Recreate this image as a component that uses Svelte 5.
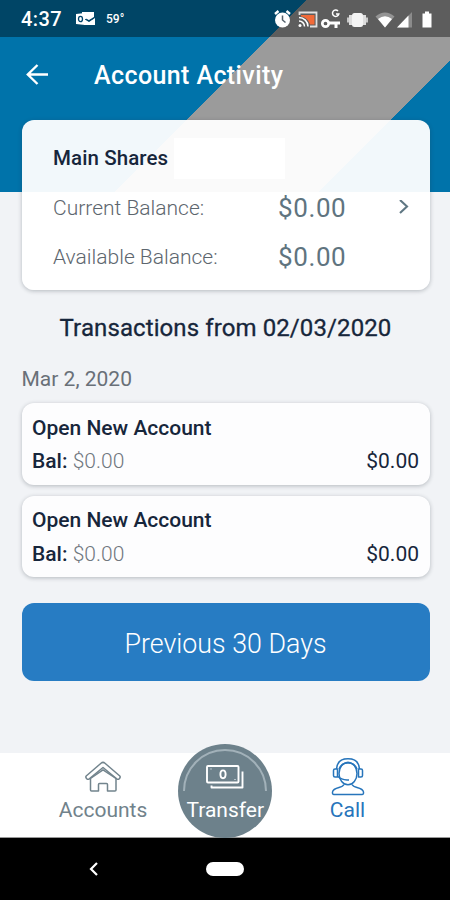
<script lang="ts">
  type Transaction = { title: string; balance: string; amount: string };

  const balances = [
    { label: 'Current Balance:', value: '$0.00' },
    { label: 'Available Balance:', value: '$0.00' }
  ];

  const transactions: Transaction[] = [
    { title: 'Open New Account', balance: '$0.00', amount: '$0.00' },
    { title: 'Open New Account', balance: '$0.00', amount: '$0.00' }
  ];
</script>

<div class="screen">
  <div class="status-bar">
    <span class="time">4:37</span>
    <svg class="mail" width="20" height="16" viewBox="0 0 20 16">
      <path d="M6 1h12v5l-5 3-7-2z" fill="#fff" />
      <path d="M8 8l5 3 6-4v7H8z" fill="#fff" />
      <path d="M0 3l9-1v12l-9-1z" fill="#fff" />
      <ellipse cx="4.5" cy="8" rx="2" ry="2.7" fill="none" stroke="#00446a" stroke-width="1.3" />
      <path d="M10 8l3 2 5-3" fill="none" stroke="#00446a" />
    </svg>
    <span class="temp">59°</span>
    <svg class="system" width="162" height="24" viewBox="0 0 162 24" fill="none">
      <g>
        <circle cx="9.5" cy="13" r="7.5" fill="#fff" />
        <path d="M2 7l3.5-3M13.5 4L17 7" stroke="#fff" stroke-width="2.4" />
        <path d="M9.500 8.500V13l3 2.500" stroke="#53606a" stroke-width="1.500" />
      </g>
      <path d="M26.500 8V5.500H43.500V19.500H37" stroke="#e2e2e2" stroke-width="1.800" />
      <path d="M28 8h13.500v9.500H37C36 13 32 10 28 9.500z" fill="#f26a38" />
      <path d="M26 10.500a9 9 0 0 1 9 9M26 14a5.500 5.500 0 0 1 5.500 5.500" stroke="#fff" stroke-width="1.500" />
      <circle cx="27" cy="18.500" r="1.500" fill="#fff" />
      <circle cx="52.500" cy="16.500" r="3.200" stroke="#fff" stroke-width="2.700" />
      <path d="M56 16h11M63 16v5" stroke="#fff" stroke-width="3" />
      <path d="M65 4a3.200 3.200 0 1 0 .8 3h-2.800" stroke="#fff" stroke-width="1.500" />
      <rect x="79" y="6" width="11" height="14" rx="2.500" fill="#f4f4f4" />
      <path d="M77.500 8v10M91.500 8v10" stroke="#ddd" stroke-width="3" />
      <path d="M75 10.500v5M94 10.500v5" stroke="#c8c8c8" stroke-width="2" />
      <path d="M102.500 9.500Q112 1.500 121.500 9.500L112 20.500z" fill="#949494" />
      <path d="M105 12Q112 6.500 119 12l-7 8.500z" fill="#fff" />
      <path d="M139 5v15.500H124z" fill="#8b8b8b" />
      <path d="M135.500 8.500v12H124z" fill="#fff" />
      <path d="M149.500 6.500h2.500v-2h4v2h2.500v14h-9z" fill="#fff" />
    </svg>
  </div>

  <header>
    <svg width="24" height="24" viewBox="0 0 24 24" fill="none" stroke="#fff" stroke-width="2.400">
      <path d="M23 11.500H3M12.500 2L2.800 11.500l9.700 9.500" />
    </svg>
    <h1>Account Activity</h1>
  </header>

  <main>
    <section class="card account">
      <div class="account-name">
        <span>Main Shares</span>
        <span class="mask"></span>
      </div>
      {#each balances as row, i}
        <div class="balance-row">
          <span class="label">{row.label}</span>
          <span class="value">{row.value}</span>
          {#if i === 0}
            <svg width="12" height="16" viewBox="0 0 12 16" fill="none" stroke="#5f7783" stroke-width="2.100">
              <path d="M2 0L9 6.500 2 13" />
            </svg>
          {/if}
        </div>
      {/each}
    </section>

    <h2>Transactions from 02/03/2020</h2>
    <p class="date">Mar 2, 2020</p>

    <div class="list">
      {#each transactions as item}
        <article class="card transaction">
          <div class="title">{item.title}</div>
          <div class="detail">
            <span><b>Bal:</b> <span class="bal">{item.balance}</span></span>
            <span class="amount">{item.amount}</span>
          </div>
        </article>
      {/each}
    </div>

    <button>Previous 30 Days</button>
  </main>

  <nav>
    <div class="tab accounts">
      <svg width="38" height="34" viewBox="0 0 38 34" fill="none" stroke="#72848d" stroke-width="1.500" stroke-linejoin="round">
        <path d="M2.200 16L17 3.200Q19 1.500 21 3.200L35.800 16q1 1.300-.6 2.800-1.200 1-2.500 0L19 7.500 5.300 18.800q-1.300 1-2.500 0Q1.200 17.300 2.200 16z" />
        <path d="M6.500 18.500V30q0 1 1 1h7v-6.500q0-1 1-1h7q1 0 1 1V31h7.500q1 0 1-1V18.500L19 9.800z" />
      </svg>
      <span>Accounts</span>
    </div>
    <div class="tab transfer">
      <svg class="arc" width="84" height="42" viewBox="0 0 84 42" fill="none">
        <path d="M1 42a41 41 0 0 1 82 0" stroke="#a2b1b9" stroke-width="2" />
      </svg>
      <svg width="38" height="25" viewBox="0 0 38 25" fill="none" stroke="#fff" stroke-width="1.900" stroke-linejoin="round">
        <rect x="1" y="1" width="31.500" height="16.500" rx="1" />
        <ellipse cx="17" cy="9.300" rx="2.600" ry="3.900" />
        <path d="M36.500 6.500v16H5.500v-2" />
        <path d="M4 4h2M28 14.500h2" stroke="#b4c1c8" stroke-width="1" />
      </svg>
      <span>Transfer</span>
    </div>
    <div class="tab call">
      <svg width="34" height="40" viewBox="0 0 34 40" fill="none" stroke="#2775bb" stroke-width="1.500" stroke-linejoin="round">
        <ellipse cx="17" cy="16.500" rx="9" ry="11.300" />
        <path d="M5.500 12C6 5 10.500 1.800 17 1.800S28 5 28.500 12" />
        <path d="M8 12C10 7 13 6 17 6s7 1 9 6" />
        <path d="M6.500 12H4q-1.500 0-1.500 1.500v5Q2.500 20 4 20h2.500zM27.500 12H30q1.500 0 1.500 1.500v5q0 1.500-1.500 1.500h-2.500z" />
        <path d="M7 19.500q3 3 9 3.500h2" />
        <path d="M13 27.500q-1 2-5 3-6 1.500-6.500 4.500-.3 2.500 1.500 2.500h28q1.800 0 1.500-2.500-.5-3-6.500-4.500-4-1-5-3" />
      </svg>
      <span>Call</span>
    </div>
  </nav>

  <div class="system-nav">
    <svg width="10" height="16" viewBox="0 0 10 16" fill="none" stroke="#fff" stroke-width="2.200">
      <path d="M9 2L3 8l6 6" />
    </svg>
    <span class="pill"></span>
  </div>
</div>

<style>
  :global(body) {
    margin: 0;
  }

  .screen {
    width: 450px;
    height: 900px;
    display: flex;
    flex-direction: column;
    overflow: hidden;
    font-family: Roboto, sans-serif;
    color: #17263b;
    background:
      linear-gradient(135deg, #0073aa 47.66%, #9b9b9b 47.76%, #9b9b9b 79.44%, #0073aa 79.54%) 0 0 / 450px 192px no-repeat,
      #f1f3f6;
  }

  .screen *,
  .screen {
    box-sizing: border-box;
    white-space: nowrap;
  }

  svg {
    display: block;
    flex: none;
  }

  .status-bar {
    height: 37px;
    flex: none;
    display: flex;
    align-items: center;
    padding: 0 15px 0 21px;
    background: rgba(0, 0, 0, 0.4);
    color: #fff;
    font-weight: 500;
  }

  .time {
    width: 55px;
    font-size: 20px;
    letter-spacing: 0.4px;
  }

  .temp {
    margin-left: 10px;
    font-size: 12px;
  }

  .system {
    margin-left: auto;
  }

  header {
    height: 83px;
    flex: none;
    display: flex;
    align-items: center;
    gap: 45px;
    padding: 0 25px 8px;
  }

  h1 {
    margin: 1px 0 0;
    color: #fff;
    font-size: 25px;
    font-weight: 500;
    letter-spacing: 0.4px;
  }

  main {
    flex: 1;
    padding: 0 20.5px 0 21.5px;
  }

  .card {
    border-radius: 12px;
    background: rgba(255, 255, 255, 0.95);
    box-shadow: 0 1px 4px rgba(40, 50, 60, 0.3);
  }

  .account {
    height: 170px;
    padding: 13px 20px 0 31.5px;
  }

  .account-name {
    height: 50px;
    display: flex;
    align-items: center;
    font-size: 20.5px;
    font-weight: 500;
    letter-spacing: 0.1px;
  }

  .mask {
    width: 111px;
    height: 41px;
    margin-left: 6px;
    background: #fff;
  }

  .balance-row {
    height: 49px;
    display: grid;
    grid-template-columns: 225px 1fr auto;
    align-items: center;
  }

  .label {
    font-size: 21px;
    font-weight: 300;
    color: #5d666e;
  }

  .value {
    font-size: 26px;
    letter-spacing: 0.6px;
    color: #60747f;
  }

  h2 {
    margin: 24px 0 0;
    line-height: 28px;
    font-size: 24px;
    font-weight: 400;
    letter-spacing: 0.1px;
    text-align: center;
    -webkit-text-stroke: 0.3px #17263b;
  }

  .date {
    margin: 25px 0 0;
    line-height: 24px;
    font-size: 21px;
    color: #697078;
  }

  .list {
    margin-top: 12px;
    display: flex;
    flex-direction: column;
    gap: 11px;
  }

  .transaction {
    height: 81.5px;
    padding: 8.6px 10.5px;
    font-size: 21px;
    line-height: 33.4px;
    background: #fdfdfe;
  }

  .title,
  b {
    font-weight: 500;
  }

  .detail {
    display: flex;
    justify-content: space-between;
  }

  .bal {
    font-weight: 300;
    color: #70777e;
  }

  button {
    display: block;
    width: 100%;
    height: 78px;
    margin-top: 26px;
    padding: 4px 0 0;
    border: 0;
    border-radius: 12px;
    background: #277cc3;
    color: #fff;
    font: 300 26.8px Roboto, sans-serif;
  }

  nav {
    height: 85px;
    flex: none;
    display: flex;
    justify-content: space-between;
    padding: 0 55.5px 0 56px;
    background: #fff;
    border-bottom: 1px solid #999;
    font-size: 21px;
    line-height: 26px;
    color: #71828b;
  }

  .tab {
    width: 94px;
    display: flex;
    flex-direction: column;
    align-items: center;
    position: relative;
  }

  .accounts {
    padding-top: 7px;
    gap: 3px;
  }

  .transfer {
    height: 94px;
    margin-top: -9.5px;
    padding-top: 21px;
    gap: 7px;
    border-radius: 50%;
    background: #6d818b;
    color: #fff;
  }

  .arc {
    position: absolute;
    top: 5px;
    left: 5px;
  }

  .call {
    padding-top: 4px;
    color: #2775bb;
  }

  .system-nav {
    height: 62px;
    flex: none;
    display: flex;
    align-items: center;
    gap: 108px;
    padding: 0 0 1px 88px;
    background: #000;
  }

  .pill {
    width: 38px;
    height: 14px;
    border-radius: 7px;
    background: #fff;
  }
</style>
